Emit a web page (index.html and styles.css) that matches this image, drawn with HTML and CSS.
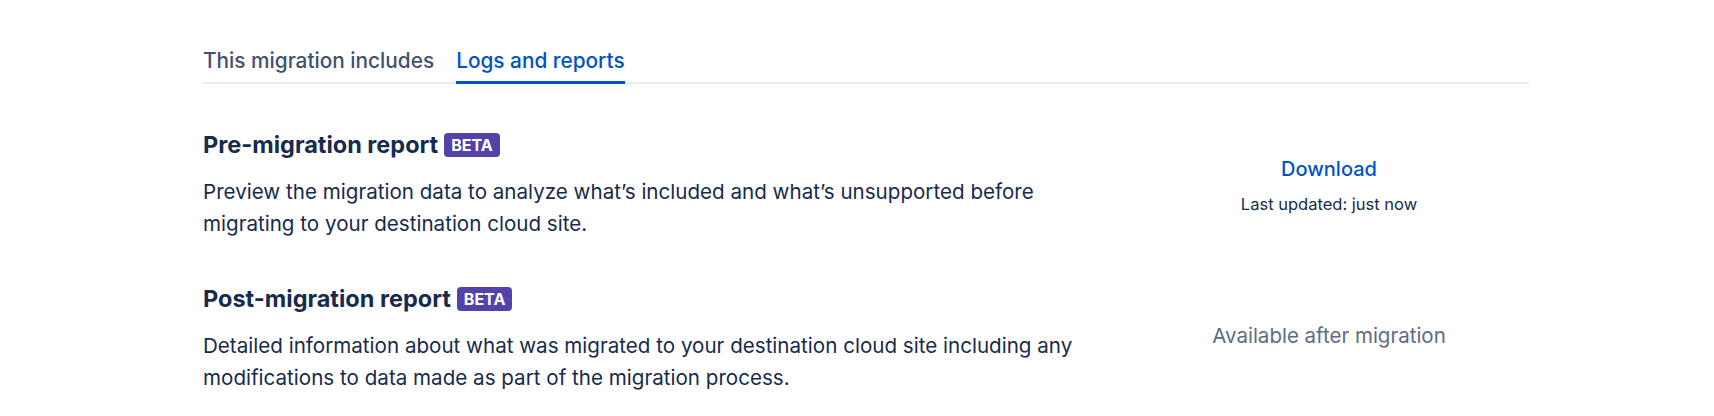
FILE: index.html
```html
<!DOCTYPE html>
<html lang="en">
<head>
<meta charset="utf-8">
<title>Logs and reports</title>
<link rel="stylesheet" href="styles.css">
</head>
<body>
<div class="page">
  <nav class="tabs">
    <div class="tab">This migration includes</div>
    <div class="tab active">Logs and reports</div>
  </nav>
  <div class="reports">
    <section class="report">
      <div class="info">
        <h3 class="title">Pre-migration report <span class="badge">BETA</span></h3>
        <p class="desc">Preview the migration data to analyze what’s included and what’s unsupported before migrating to your destination cloud site.</p>
      </div>
      <div class="action">
        <a class="link" href="#">Download</a>
        <span class="meta">Last updated: just now</span>
      </div>
    </section>
    <section class="report">
      <div class="info">
        <h3 class="title">Post-migration report <span class="badge">BETA</span></h3>
        <p class="desc">Detailed information about what was migrated to your destination cloud site including any modifications to data made as part of the migration process.</p>
      </div>
      <div class="action">
        <span class="pending">Available after migration</span>
      </div>
    </section>
  </div>
</div>
</body>
</html>
```
FILE: styles.css
```css
html, body {
  margin: 0;
  padding: 0;
  background: #fff;
}
body {
  font-family: Inter, "Noto Sans", sans-serif;
  color: #172B4D;
}
.page {
  width: 1326px;
  padding: 49px 0 0 203px;
}
.tabs {
  display: flex;
  gap: 22px;
  border-bottom: 2px solid #EBECF0;
}
.tab {
  font-size: 20.8px;
  font-weight: 500;
  color: #42526E;
  line-height: 24px;
  padding-bottom: 8px;
  margin-bottom: -2px;
  border-bottom: 3px solid transparent;
}
.tab.active {
  color: #0052CC;
  border-bottom-color: #0052CC;
}
.reports {
  display: flex;
  flex-direction: column;
  gap: 45px;
  padding-top: 47px;
}
.report {
  display: flex;
  align-items: center;
}
.info {
  flex: 1;
  padding-right: 40px;
}
.title {
  margin: 0;
  font-size: 23.5px;
  font-weight: 700;
  line-height: 28px;
  display: flex;
  align-items: center;
  gap: 6px;
}
.badge {
  display: inline-block;
  background: #5243AA;
  color: #fff;
  font-size: 16px;
  font-weight: 700;
  line-height: 24px;
  padding: 0 7px;
  border-radius: 4px;
}
.desc {
  margin: 17px 0 0;
  font-size: 20.6px;
  line-height: 32px;
  max-width: 900px;
}
.action {
  width: 400px;
  display: flex;
  flex-direction: column;
  align-items: center;
  gap: 13px;
}
.link {
  color: #0052CC;
  text-decoration: none;
  font-size: 20px;
  font-weight: 500;
  line-height: 24px;
}
.meta {
  font-size: 16.5px;
  line-height: 20px;
  color: #172B4D;
}
.pending {
  font-size: 20.5px;
  line-height: 24px;
  color: #5E6C84;
  margin-bottom: 8px;
}
```
